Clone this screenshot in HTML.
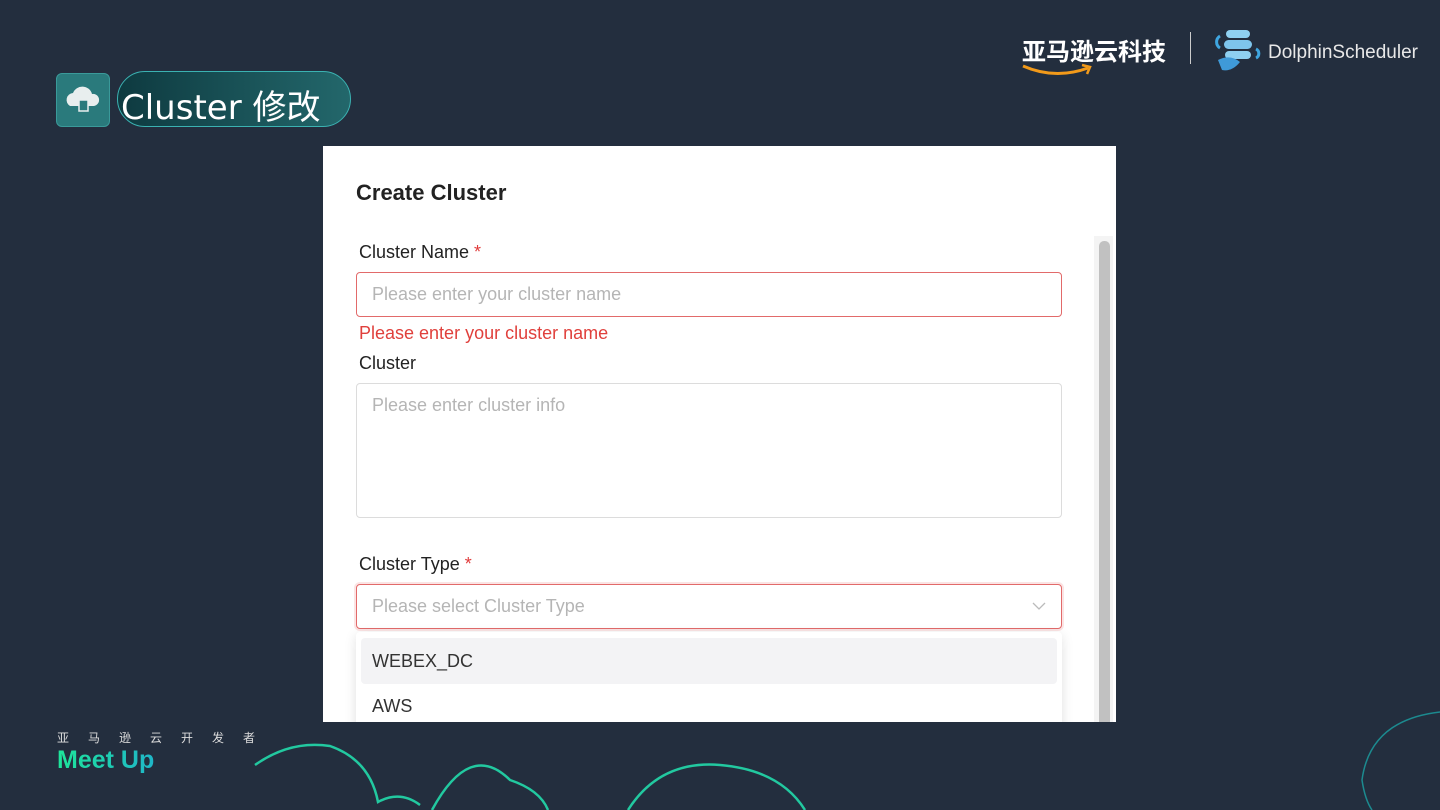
<!DOCTYPE html>
<html><head><meta charset="utf-8"><style>
*{margin:0;padding:0;box-sizing:border-box}
body{width:1440px;height:810px;background:#232e3e;position:relative;overflow:hidden;font-family:"Liberation Sans","Noto Sans CJK SC",sans-serif}
.abs{position:absolute}
.panel{left:323px;top:146px;width:793px;height:576px;background:#fff;overflow:hidden}
.lbl{font-size:18px;color:#222}
.req{color:#e03a3a}
.input{border:1px solid #dcdcdc;border-radius:4px;background:#fff;font-size:18px;color:#b5b5b5;padding-left:15px}
.err{border-color:#e26a6a}
</style></head><body>
<div class="abs" style="left:56px;top:73px;width:54px;height:54px;border-radius:6px;background:#2a7a7c;border:1px solid #3a9a9a"></div>
<svg class="abs" style="left:62px;top:80px" width="42" height="40" viewBox="0 0 42 40"><path d="M8 26 a7 7 0 0 1 3-13 a10 10 0 0 1 19 1 a6 6 0 0 1 2 12 z" fill="#e8eeee"/><rect x="17" y="20" width="9" height="11" fill="#2a7a7c" stroke="#e8eeee" stroke-width="1.5"/></svg>
<div class="abs" style="left:117px;top:71px;width:234px;height:56px;border-radius:28px;border:1px solid #3bb2b2;background:linear-gradient(90deg,#0e3a40,#23676b)"></div>
<div class="abs" style="left:121px;top:80px;font-size:34px;color:#fff;font-family:'DejaVu Sans','Noto Sans CJK SC',sans-serif">Cluster 修改</div>
<div class="abs" style="left:1022px;top:32px;font-size:24px;color:#fff;font-weight:bold;font-family:'Noto Sans CJK SC',sans-serif">亚马逊云科技</div>
<svg class="abs" style="left:1020px;top:60px" width="80" height="20"><path d="M3 6 Q35 20 68 8" stroke="#f29a1a" stroke-width="3" fill="none"/><path d="M62 5 L70 7 L67 14" stroke="#f29a1a" stroke-width="2.5" fill="none"/></svg>
<div class="abs" style="left:1190px;top:32px;width:1px;height:32px;background:#ccc"></div>
<svg class="abs" style="left:1212px;top:28px" width="56" height="46"><rect x="14" y="2" width="24" height="8" rx="4" fill="#8fd0f0"/><rect x="12" y="12" width="28" height="9" rx="4.5" fill="#7ec5ec"/><rect x="13" y="23" width="26" height="8" rx="4" fill="#8fd0f0"/><path d="M8 8 a7 7 0 0 0 0 12" stroke="#3fa6e0" stroke-width="3" fill="none"/><path d="M44 21 a5 5 0 0 1 0 9" stroke="#3fa6e0" stroke-width="3" fill="none"/><path d="M6 32 Q18 26 28 34 Q20 44 10 42 Z" fill="#3f9ad8"/></svg>
<div class="abs" style="left:1268px;top:42px;font-size:19px;color:#e8e8e8">DolphinScheduler</div>
<div class="abs panel">
 <div class="abs" style="left:33px;top:34px;font-size:22px;color:#222;font-weight:bold">Create Cluster</div>
 <div class="abs lbl" style="left:36px;top:96px">Cluster Name <span class="req">*</span></div>
 <div class="abs input err" style="left:33px;top:126px;width:706px;height:45px;line-height:43px">Please enter your cluster name</div>
 <div class="abs" style="left:36px;top:177px;font-size:18px;color:#e0403c">Please enter your cluster name</div>
 <div class="abs lbl" style="left:36px;top:207px">Cluster</div>
 <div class="abs input" style="left:33px;top:237px;width:706px;height:135px;padding-top:11px">Please enter cluster info</div>
 <div class="abs lbl" style="left:36px;top:408px">Cluster Type <span class="req">*</span></div>
 <div class="abs input err" style="left:33px;top:438px;width:706px;height:45px;line-height:43px;box-shadow:0 0 0 2px #fbe4e4">Please select Cluster Type</div>
 <svg class="abs" style="left:709px;top:455px" width="14" height="10"><path d="M1 2 L7 8 L13 2" stroke="#bbb" stroke-width="1.3" fill="none"/></svg>
 <div class="abs" style="left:33px;top:486px;width:706px;height:120px;background:#fff;box-shadow:0 3px 12px rgba(0,0,0,.12);border-radius:4px"></div>
 <div class="abs" style="left:38px;top:492px;width:696px;height:46px;background:#f3f3f5;border-radius:4px"></div>
 <div class="abs" style="left:49px;top:505px;font-size:18px;color:#333">WEBEX_DC</div>
 <div class="abs" style="left:49px;top:550px;font-size:18px;color:#333">AWS</div>
 <div class="abs" style="left:771px;top:90px;width:19px;height:490px;background:#f4f4f4"></div>
 <div class="abs" style="left:776px;top:95px;width:11px;height:490px;background:#c1c1c1;border-radius:5px"></div>
</div>
<div class="abs" style="left:57px;top:729px;font-size:12px;color:#ddd;letter-spacing:19px;font-family:'Noto Sans CJK SC',sans-serif">亚马逊云开发者</div>
<div class="abs" style="left:57px;top:746px;font-size:25px;font-weight:bold;background:linear-gradient(90deg,#1ee59a,#1fb6c8);-webkit-background-clip:text;color:transparent">Meet Up</div>
<svg class="abs" style="left:0;top:700px" width="1440" height="110">
<path d="M255 765 Q290 740 330 746 Q370 760 378 802 Q400 790 420 805" stroke="#22c9a0" stroke-width="2.5" fill="none" transform="translate(0,-700)"/>
<path d="M432 810 Q470 740 510 780 Q540 790 548 810" stroke="#22c9a0" stroke-width="2.5" fill="none" transform="translate(0,-700)"/>
<path d="M628 810 Q660 760 720 765 Q780 770 805 810" stroke="#22c9a0" stroke-width="2.5" fill="none" transform="translate(0,-700)"/>
<path d="M1440 712 Q1370 720 1362 780 Q1365 800 1372 810" stroke="#1c8a8f" stroke-width="1.5" fill="none" transform="translate(0,-700)"/>
</svg>
</body></html>
